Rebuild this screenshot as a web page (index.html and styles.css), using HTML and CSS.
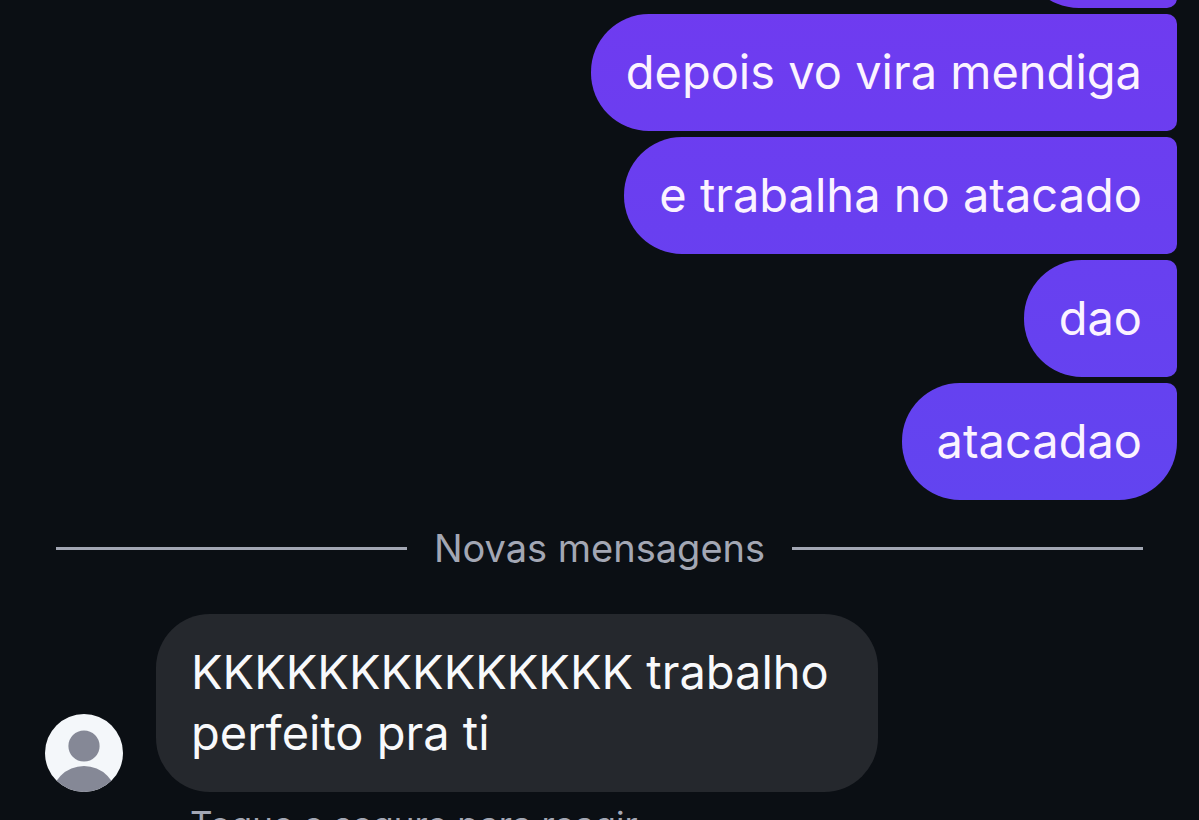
FILE: index.html
```html
<!DOCTYPE html>
<html lang="pt-BR">
<head>
<meta charset="utf-8">
<meta name="viewport" content="width=device-width, initial-scale=1">
<title>Conversa</title>
<link rel="stylesheet" href="styles.css">
</head>
<body>
<main class="chat">
  <section class="sent">
    <p class="bubble bubble-sent bubble-short"></p>
    <p class="bubble bubble-sent">depois vo vira mendiga</p>
    <p class="bubble bubble-sent">e trabalha no atacado</p>
    <p class="bubble bubble-sent">dao</p>
    <p class="bubble bubble-sent bubble-last">atacadao</p>
  </section>
  <div class="divider"><span>Novas mensagens</span></div>
  <section class="received">
    <svg class="avatar" viewBox="0 0 78 78" aria-hidden="true">
      <defs><clipPath id="disc"><circle cx="39" cy="39" r="39"/></clipPath></defs>
      <circle cx="39" cy="39" r="39" fill="#f4f7fa"/>
      <g clip-path="url(#disc)" fill="#858896">
        <circle cx="39" cy="32" r="15.6"/>
        <circle cx="39" cy="85" r="33"/>
      </g>
    </svg>
    <p class="bubble bubble-received">KKKKKKKKKKKKKK trabalho perfeito pra ti</p>
  </section>
  <p class="hint">Toque e segure para reagir</p>
</main>
</body>
</html>
```
FILE: styles.css
```css
* { box-sizing: border-box; }

body {
  margin: 0;
  height: 100vh;
  overflow: hidden;
  background: #0b0f14;
  color: #f8f9fb;
  font-family: Inter, Roboto, sans-serif;
}

p { margin: 0; }

/* The thread is scrolled so that the first bubble is nearly out of view. */
.chat { margin-top: -109px; }

.sent {
  display: flex;
  flex-direction: column;
  align-items: flex-end;
  gap: 6px;
  padding-right: 22px;
}

.bubble {
  min-height: 117px;
  padding: 27px 35px 29px;
  font-size: 47px;
  line-height: 61px;
}

.bubble-sent {
  border-radius: 58px 10px 10px 58px;
  background: linear-gradient(#6f3bf0, #6244f0 500px) fixed;
  color: #fbf3ff;
}

.bubble-short { width: 156px; }

.bubble-last { border-bottom-right-radius: 58px; }

.divider {
  display: flex;
  align-items: center;
  gap: 27px;
  margin: 24px 56px 41px;
  color: #a3a7b4;
  font-size: 38px;
  line-height: 49px;
}

.divider::before,
.divider::after {
  content: "";
  flex: 1;
  height: 3px;
  background: #a3a7b4;
}

.received {
  display: flex;
  align-items: flex-end;
  gap: 33px;
  padding-left: 45px;
}

.avatar {
  flex: none;
  width: 78px;
  height: 78px;
}

.bubble-received {
  max-width: 722px;
  border-radius: 54px;
  background: #25282d;
}

.hint {
  padding: 10px 190px 0;
  color: #a3a7b4;
  font-size: 35px;
  line-height: 44px;
}
```
